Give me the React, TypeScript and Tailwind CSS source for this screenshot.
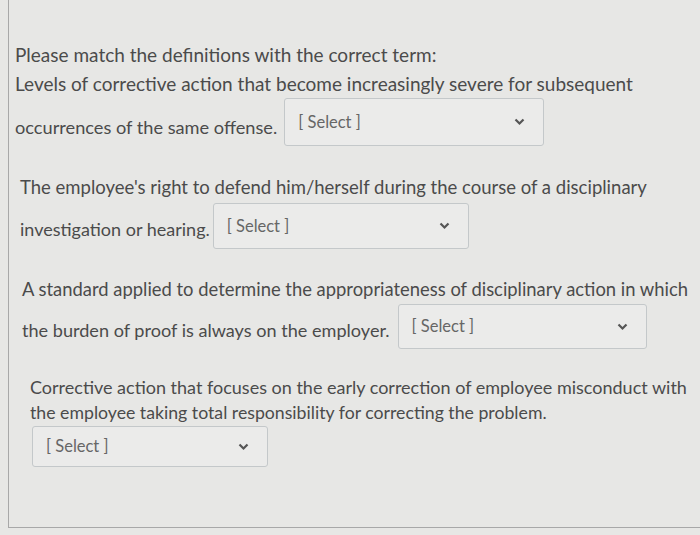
import React from 'react'

// Dropdown placeholder used inside each matching question
function SelectBox({ width, height }: { width: string; height: string }) {
  return (
    <div
      className={`${width} ${height} flex shrink-0 items-center justify-between rounded-[3px] border border-[#c4c8ca] bg-[#ebebea] pl-[13px] pr-[18px]`}
    >
      <span className="text-[16.5px] text-[#666]">[ Select ]</span>
      <svg width="11" height="8" viewBox="0 0 11 8" className="text-[#555]">
        <polyline points="1.5,1.5 5.5,5.5 9.5,1.5" fill="none" stroke="currentColor" strokeWidth="2.2" />
      </svg>
    </div>
  )
}

export default function App() {
  return (
    <div className="h-[535px] w-[700px] overflow-hidden bg-[#e7e7e5] text-[#4b4b4b] [font-family:Lato,'Open_Sans',sans-serif]">
      <div className="ml-2 h-[528px] border-b border-l border-[#a8a8a8] pt-[40px]">
        {/* Question 1 */}
        <div className="pl-[6px] text-[19px]">
          <div className="h-[29px] leading-[29px]">Please match the definitions with the correct term:</div>
          <div className="h-[29px] leading-[29px]">Levels of corrective action that become increasingly severe for subsequent</div>
          <div className="flex items-center">
            <span className="pt-[12px] text-[18.2px]">occurrences of the same offense.</span>
            <div className="ml-[7px]">
              <SelectBox width="w-[260px]" height="h-[48px]" />
            </div>
          </div>
        </div>

        {/* Question 2 */}
        <div className="mt-[27px] pl-[11px] text-[18.5px]">
          <div className="h-[29px] leading-[29px]">The employee's right to defend him/herself during the course of a disciplinary</div>
          <div className="mt-[1px] flex items-center">
            <span className="pt-[6px] text-[18px]">investigation or hearing.</span>
            <div className="ml-[3px]">
              <SelectBox width="w-[256px]" height="h-[46px]" />
            </div>
          </div>
        </div>

        {/* Question 3 */}
        <div className="mt-[26px] pl-[13px] text-[18.4px]">
          <div className="h-[29px] leading-[29px]">A standard applied to determine the appropriateness of disciplinary action in which</div>
          <div className="flex items-center">
            <span className="pt-[8px] text-[18.1px]">the burden of proof is always on the employer.</span>
            <div className="ml-[8px]">
              <SelectBox width="w-[249px]" height="h-[45px]" />
            </div>
          </div>
        </div>

        {/* Question 4 */}
        <div className="mt-[25px] pl-[21px] text-[18px]">
          <div className="h-[26px] leading-[26px]">Corrective action that focuses on the early correction of employee misconduct with</div>
          <div className="h-[26px] text-[17.7px] leading-[26px]">the employee taking total responsibility for correcting the problem.</div>
          <div className="ml-[2px]">
            <SelectBox width="w-[236px]" height="h-[41px]" />
          </div>
        </div>
      </div>
    </div>
  )
}
